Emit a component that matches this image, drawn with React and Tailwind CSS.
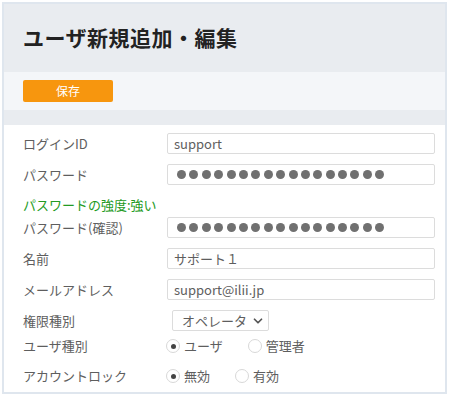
import { ChevronDown } from 'lucide-react';

const font = { fontFamily: '"Noto Sans CJK JP", "Noto Sans", sans-serif' };

function Field({ label, children }) {
  return (
    <div className="flex items-center h-[21px] mb-[10px]">
      <div className="w-[144px] shrink-0 text-[13px] text-[#5e5e5e]">{label}</div>
      {children}
    </div>
  );
}

function TextBox({ value }) {
  return (
    <div className="flex-1 h-[21px] border border-[#dcdcdc] rounded-[2px] bg-white px-[6px] flex items-center text-[13px] text-[#5e5e5e]">
      {value}
    </div>
  );
}

function PasswordBox({ count = 17 }) {
  return (
    <div className="flex-1 h-[21px] border border-[#dcdcdc] rounded-[2px] bg-white px-[9px] flex items-center gap-[3.4px]">
      {Array.from({ length: count }).map((_, i) => (
        <span key={i} className="w-[9px] h-[9px] rounded-full bg-[#707070]" />
      ))}
    </div>
  );
}

function Radio({ checked, label }) {
  return (
    <label className="flex items-center gap-[4px] text-[13px] text-[#5e5e5e]">
      <span className="w-[14px] h-[14px] rounded-full border border-[#d8d8d8] bg-white flex items-center justify-center">
        {checked && <span className="w-[5px] h-[5px] rounded-full bg-[#444]" />}
      </span>
      {label}
    </label>
  );
}

function RadioRow({ label, options, last }) {
  return (
    <div className={`flex items-center h-[20px] ${last ? '' : 'mb-[10px]'}`}>
      <div className="w-[143px] shrink-0 text-[13px] text-[#5e5e5e]">{label}</div>
      <div className="flex items-center gap-[25px]">
        {options.map((o) => (
          <Radio key={o.label} checked={o.checked} label={o.label} />
        ))}
      </div>
    </div>
  );
}

export default function App() {
  return (
    <div className="w-[449px] h-[396px] bg-white p-[2px]" style={font}>
      <div className="h-full border-2 border-[#dfe6ee] flex flex-col overflow-hidden">
        <div className="h-[68px] shrink-0 bg-[#e9ecf0] px-[19px] flex items-center">
          <h1 className="text-[21px] font-bold text-[#222] tracking-[0.5px]">ユーザ新規追加・編集</h1>
        </div>
        <div className="h-[38px] shrink-0 bg-[#f4f6f9] px-[19px] flex items-center">
          <button className="w-[90px] h-[22px] bg-[#f7960e] text-white text-[12px] rounded-[2px]">保存</button>
        </div>
        <div className="h-[15px] shrink-0 bg-[#e9ecf0]" />
        <div className="flex-1 bg-white pl-[19px] pr-[10px] pt-[8px]">
          <Field label="ログインID">
            <TextBox value="support" />
          </Field>
          <Field label="パスワード">
            <PasswordBox />
          </Field>
          <div className="h-[20px] flex items-center text-[13px] text-[#239a23]">パスワードの強度:強い</div>
          <div className="mt-[2px]">
            <Field label="パスワード(確認)">
              <PasswordBox />
            </Field>
          </div>
          <Field label="名前">
            <TextBox value="サポート１" />
          </Field>
          <Field label="メールアドレス">
            <TextBox value="support@ilii.jp" />
          </Field>
          <div className="flex items-center h-[21px] mb-[5px]">
            <div className="w-[149px] shrink-0 text-[13px] text-[#5e5e5e]">権限種別</div>
            <div className="w-[97px] h-[21px] border border-[#dcdcdc] rounded-[2px] bg-white flex items-center pl-[9px] gap-[4px] text-[13px] text-[#5e5e5e] whitespace-nowrap">
              オペレータ
              <ChevronDown size={14} strokeWidth={3} className="text-[#555] shrink-0" />
            </div>
          </div>
          <RadioRow
            label="ユーザ種別"
            options={[
              { label: 'ユーザ', checked: true },
              { label: '管理者', checked: false },
            ]}
          />
          <RadioRow
            last
            label="アカウントロック"
            options={[
              { label: '無効', checked: true },
              { label: '有効', checked: false },
            ]}
          />
        </div>
      </div>
    </div>
  );
}
